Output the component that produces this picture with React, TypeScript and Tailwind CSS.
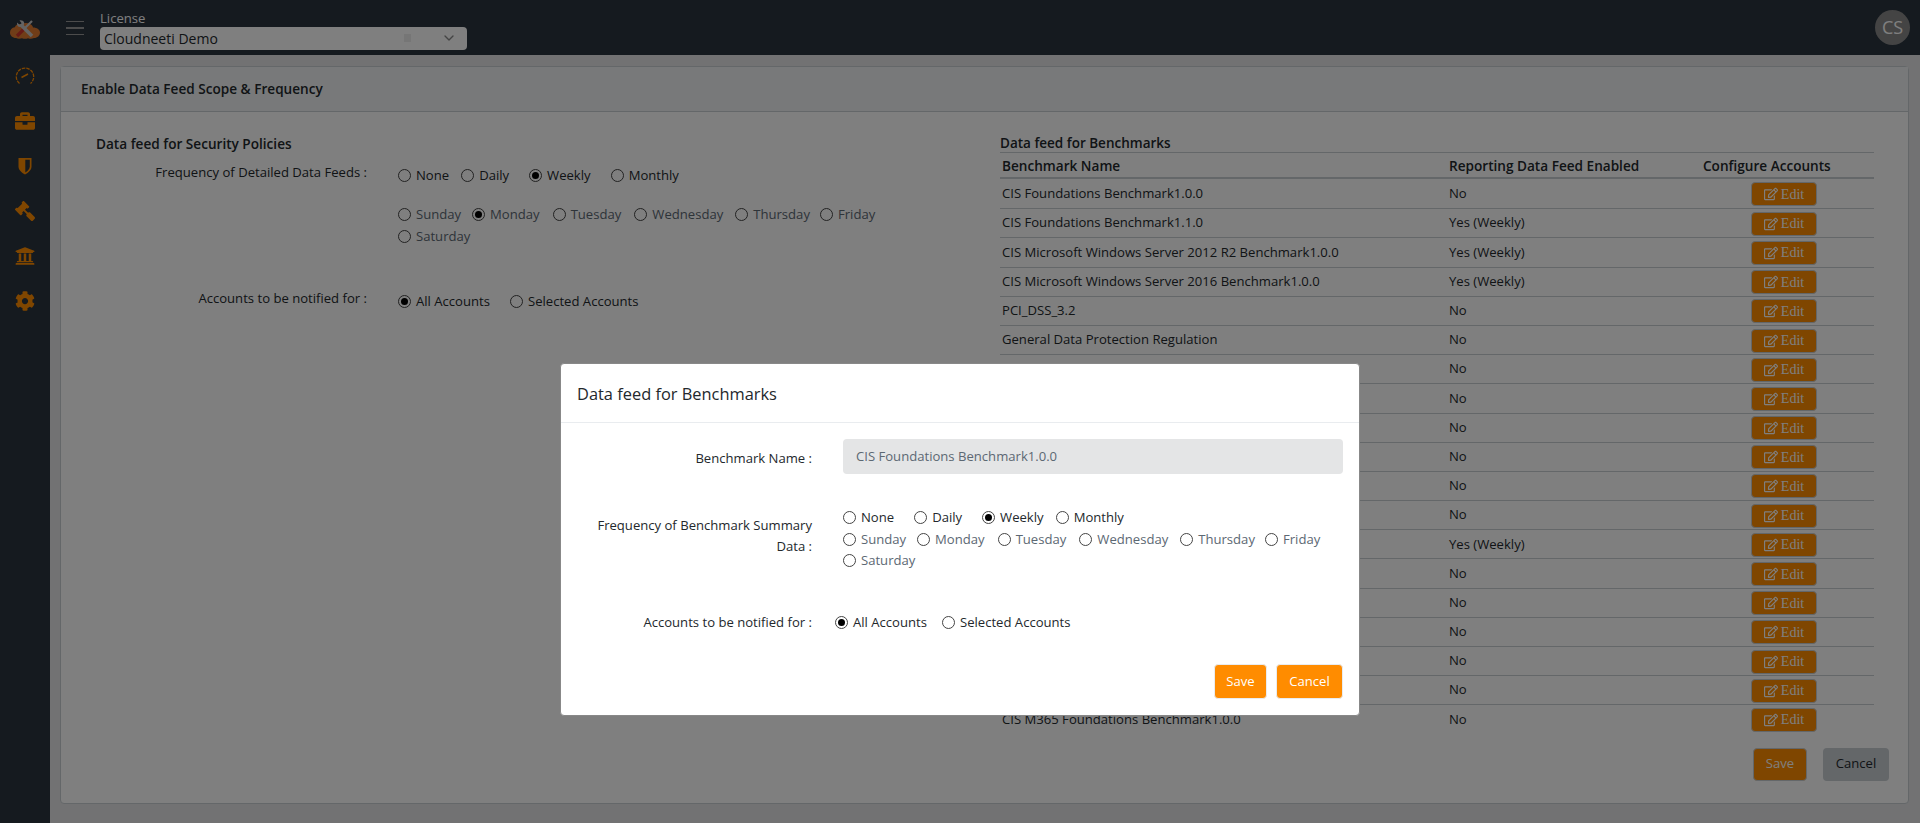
import React from 'react';
import { ChevronDown } from 'lucide-react';
import { FaBriefcase, FaCog, FaGavel, FaRegEdit, FaUniversity } from 'react-icons/fa';

const benchmarks = [
  ['CIS Foundations Benchmark1.0.0', 'No'],
  ['CIS Foundations Benchmark1.1.0', 'Yes (Weekly)'],
  ['CIS Microsoft Windows Server 2012 R2 Benchmark1.0.0', 'Yes (Weekly)'],
  ['CIS Microsoft Windows Server 2016 Benchmark1.0.0', 'Yes (Weekly)'],
  ['PCI_DSS_3.2', 'No'],
  ['General Data Protection Regulation', 'No'],
  ['HIPAA Safeguards', 'No'],
  ['HITRUST CSF', 'No'],
  ['ISO 27001', 'No'],
  ['NIST 800-53', 'No'],
  ['SOC 2', 'No'],
  ['CIS Azure Foundations Benchmark1.0.0', 'No'],
  ['CIS AWS Foundations Benchmark1.2.0', 'Yes (Weekly)'],
  ['CIS Kubernetes Benchmark1.4.0', 'No'],
  ['CIS Docker Benchmark1.2.0', 'No'],
  ['FedRAMP Moderate', 'No'],
  ['CSA Cloud Controls Matrix', 'No'],
  ['AWS Well-Architected', 'No'],
  ['CIS M365 Foundations Benchmark1.0.0', 'No'],
];

function Radio({ label, checked, muted, className }: { label: string; checked?: boolean; muted?: boolean; className?: string }) {
  return (
    <span className={`inline-flex items-center ${muted ? 'text-[#5c6873]' : 'text-[#23282c]'} ${className || ''}`}>
      <span className="w-[13px] h-[13px] rounded-full border border-[#444] bg-white flex items-center justify-center mr-[5px] shrink-0">
        {checked && <span className="w-[7px] h-[7px] rounded-full bg-black" />}
      </span>
      {label}
    </span>
  );
}

function Logo() {
  return (
    <svg width="30" height="20" viewBox="0 0 30 20" fill="none">
      <path d="M6 19c-3.500 0-6-2.400-6-5.500 0-2.800 2-4.900 4.800-5.200C6 5.500 9 4.500 12 5.500c1.500-1.500 5-2 8-.5 2 1 3 2.500 3 3.500 4 0 7 2.200 7 5 0 3-2.500 5.500-6 5.500-2 1-4 1-6 .2-2 .8-4 .8-6 0-1.500.5-4 .8-6-.2z" fill="#e07a30" />
      <path d="M7 17l7-7" stroke="#d0342c" strokeWidth="3.200" />
      <path d="M14 10l8-8" stroke="#c8c8c8" strokeWidth="2.200" />
      <path d="M11 6l11 11" stroke="#c8c8c8" strokeWidth="3.600" />
      <path d="M12 7.500C9.500 9 6.500 7.500 7 3.500l2.600 2.300 2-1.600L9.500 1.500c3.800-1 6 2.500 4 5z" fill="#c8c8c8" />
    </svg>
  );
}

function GaugeIcon() {
  return (
    <svg width="20" height="20" viewBox="0 0 20 20" fill="none" stroke="currentColor" strokeWidth="1.300">
      <path d="M4.500 17.500A8.700 8.700 0 1 1 15.500 17.500" strokeDasharray="3.500 1" />
      <path d="M6.500 11.500L13 8" strokeWidth="1.500" />
    </svg>
  );
}

function ShieldIcon() {
  return (
    <svg width="20" height="20" viewBox="0 0 20 20">
      <path d="M3.500 2h13v8.500c0 3.500-3 6-6.500 8-3.500-2-6.500-4.500-6.500-8z" fill="currentColor" />
      <path d="M10.300 3.700h4.500v6.800c0 2.500-2 4.300-4.500 5.900z" fill="#2a343e" />
    </svg>
  );
}

export default function App() {
  return (
    <div className="h-[823px] flex flex-col bg-[#e4e5e6] text-[13.1px] text-[#23282c] overflow-hidden font-['Open_Sans','Liberation_Sans',sans-serif]">
      <header className="h-[55px] shrink-0 bg-[#2a343e] flex items-center">
        <div className="w-[66px] pl-[10px] pt-[2px] shrink-0">
          <Logo />
        </div>
        <div className="w-[18px] flex flex-col gap-[5px] shrink-0 pt-[1px]">
          <span className="h-[1.5px] bg-[#999]" />
          <span className="h-[1.5px] bg-[#999]" />
          <span className="h-[1.5px] bg-[#999]" />
        </div>
        <div className="ml-[16px] w-[367px] pt-[3px]">
          <div className="leading-[18px] text-white">License</div>
          <div className="h-[23px] rounded bg-white flex items-center pl-[4px] pr-[10px] text-[14px]">
            Cloudneeti Demo
            <span className="ml-auto mr-[30px] w-[7px] h-[8px] bg-[#ececec]" />
            <ChevronDown size={16} className="text-[#888]" />
          </div>
        </div>
        <div className="ml-auto mr-[10px] w-[35px] h-[35px] rounded-full bg-[#888] flex items-center justify-center text-white text-[18px]">
          CS
        </div>
      </header>

      <div className="flex-1 flex min-h-0">
        <aside className="w-[50px] shrink-0 bg-[#2a343e] flex flex-col items-center pt-[11px] gap-[25px] text-[#ff8c00]">
          <GaugeIcon />
          <FaBriefcase size={20} />
          <ShieldIcon />
          <FaGavel size={20} className="-scale-x-100" />
          <FaUniversity size={20} />
          <FaCog size={20} />
        </aside>

        <main className="flex-1 min-w-0 pt-[11px] pl-[10px] pr-[11px]">
          <div className="h-[738px] bg-white border border-[#c8ced3] rounded flex flex-col">
            <div className="h-[45px] shrink-0 bg-[#f0f3f5] border-b border-[#c8ced3] flex items-center pl-[20px] font-semibold text-[13.6px]">
              Enable Data Feed Scope &amp; Frequency
            </div>
            <div className="flex-1 flex">
              <section className="w-[939px] shrink-0 pl-[35px] pt-[21px]">
                <h3 className="font-semibold leading-[21px] text-[13.6px]">Data feed for Security Policies</h3>
                <div className="flex mt-[8px]">
                  <div className="w-[271px] text-right leading-[21px] shrink-0">Frequency of Detailed Data Feeds :</div>
                  <div className="ml-[31px] flex-1">
                    <div className="flex pt-[3px] leading-[21px]">
                      <Radio label="None" className="mr-[12px]" />
                      <Radio label="Daily" className="mr-[20px]" />
                      <Radio label="Weekly" checked className="mr-[20px]" />
                      <Radio label="Monthly" />
                    </div>
                    <div className="flex flex-wrap w-[490px] mt-[17px] leading-[22px]">
                      <Radio label="Sunday" muted className="mr-[11px]" />
                      <Radio label="Monday" checked muted className="mr-[13px]" />
                      <Radio label="Tuesday" muted className="mr-[13px]" />
                      <Radio label="Wednesday" muted className="mr-[12px]" />
                      <Radio label="Thursday" muted className="mr-[10px]" />
                      <Radio label="Friday" muted />
                      <Radio label="Saturday" muted />
                    </div>
                  </div>
                </div>
                <div className="flex mt-[41px]">
                  <div className="w-[271px] text-right leading-[21px] shrink-0">Accounts to be notified for :</div>
                  <div className="ml-[31px] flex leading-[21px] pt-[3px]">
                    <Radio label="All Accounts" checked className="mr-[20px]" />
                    <Radio label="Selected Accounts" />
                  </div>
                </div>
              </section>

              <section className="w-[874px] shrink-0 pt-[21px]">
                <h3 className="font-semibold leading-[20px] border-b border-[#c8ced3] h-[20px] text-[13.5px]">Data feed for Benchmarks</h3>
                <div className="grid grid-cols-[447px_254px_1fr] h-[26px] pt-[2px] border-b-2 border-[#c8ced3] items-center font-semibold text-[13.6px]">
                  <div className="pl-[2px]">Benchmark Name</div>
                  <div className="pl-[2px]">Reporting Data Feed Enabled</div>
                  <div className="pl-[2px]">Configure Accounts</div>
                </div>
                {benchmarks.map(([name, enabled], i) => (
                  <div key={name} className={`grid grid-cols-[447px_254px_1fr] h-[29.2px] items-center ${i > 0 ? 'border-t border-[#c8ced3]' : ''}`}>
                    <div className="pl-[2px] truncate">{name}</div>
                    <div className="pl-[2px]">{enabled}</div>
                    <div className="pl-[50px] pt-[1px]">
                      <button className="w-[66px] h-[24px] rounded bg-[#ff8c00] border border-[#c8ced3] flex items-center justify-center gap-[3px] text-white font-['Liberation_Serif',serif] text-[14px]">
                        <FaRegEdit size={14} />
                        Edit
                      </button>
                    </div>
                  </div>
                ))}
                <div className="flex justify-end gap-[16px] mt-[14px] mr-[-15px]">
                  <button className="w-[54px] h-[33px] rounded bg-[#ff8c00] border border-[#c8ced3] text-white">Save</button>
                  <button className="w-[66px] h-[33px] rounded bg-[#c8ced3] text-[#23282c]">Cancel</button>
                </div>
              </section>
            </div>
          </div>
        </main>
      </div>

      <div className="fixed inset-0 bg-black/50 flex justify-center items-start pt-[363px]">
        <div className="w-[800px] h-[353px] bg-white rounded border border-[#888] flex flex-col">
          <div className="h-[59px] shrink-0 border-b border-[#e9ecef] flex items-center pl-[16px] pt-[2px] text-[16.4px] text-[#23282c]">
            Data feed for Benchmarks
          </div>
          <div className="flex-1 pl-[16px] pr-[16px] pt-[16px]">
            <div className="flex items-center">
              <div className="w-[235px] text-right shrink-0 pt-[4px]">Benchmark Name :</div>
              <div className="ml-[31px] flex-1 h-[35px] rounded bg-[#e4e5e6] flex items-center pl-[13px] text-[#5c6873]">
                CIS Foundations Benchmark1.0.0
              </div>
            </div>
            <div className="flex mt-[33px]">
              <div className="w-[235px] text-right leading-[21px] shrink-0 pt-[8px]">Frequency of Benchmark Summary Data :</div>
              <div className="ml-[31px] flex-1 leading-[21.5px]">
                <div className="flex">
                  <Radio label="None" className="mr-[20px]" />
                  <Radio label="Daily" className="mr-[20px]" />
                  <Radio label="Weekly" checked className="mr-[12px]" />
                  <Radio label="Monthly" />
                </div>
                <div className="flex flex-wrap">
                  <Radio label="Sunday" muted className="mr-[11px]" />
                  <Radio label="Monday" muted className="mr-[13px]" />
                  <Radio label="Tuesday" muted className="mr-[13px]" />
                  <Radio label="Wednesday" muted className="mr-[12px]" />
                  <Radio label="Thursday" muted className="mr-[10px]" />
                  <Radio label="Friday" muted className="mr-[11px]" />
                  <Radio label="Saturday" muted />
                </div>
              </div>
            </div>
            <div className="flex items-center mt-[41px]">
              <div className="w-[235px] text-right shrink-0">Accounts to be notified for :</div>
              <div className="ml-[23px] flex">
                <Radio label="All Accounts" checked className="mr-[15px]" />
                <Radio label="Selected Accounts" />
              </div>
            </div>
            <div className="flex justify-end gap-[9px] mt-[32px]">
              <button className="w-[53px] h-[35px] rounded bg-[#ff8c00] border border-[#e9ecef] text-white">Save</button>
              <button className="w-[67px] h-[35px] rounded bg-[#ff8c00] border border-[#e9ecef] text-white">Cancel</button>
            </div>
          </div>
        </div>
      </div>
    </div>
  );
}
